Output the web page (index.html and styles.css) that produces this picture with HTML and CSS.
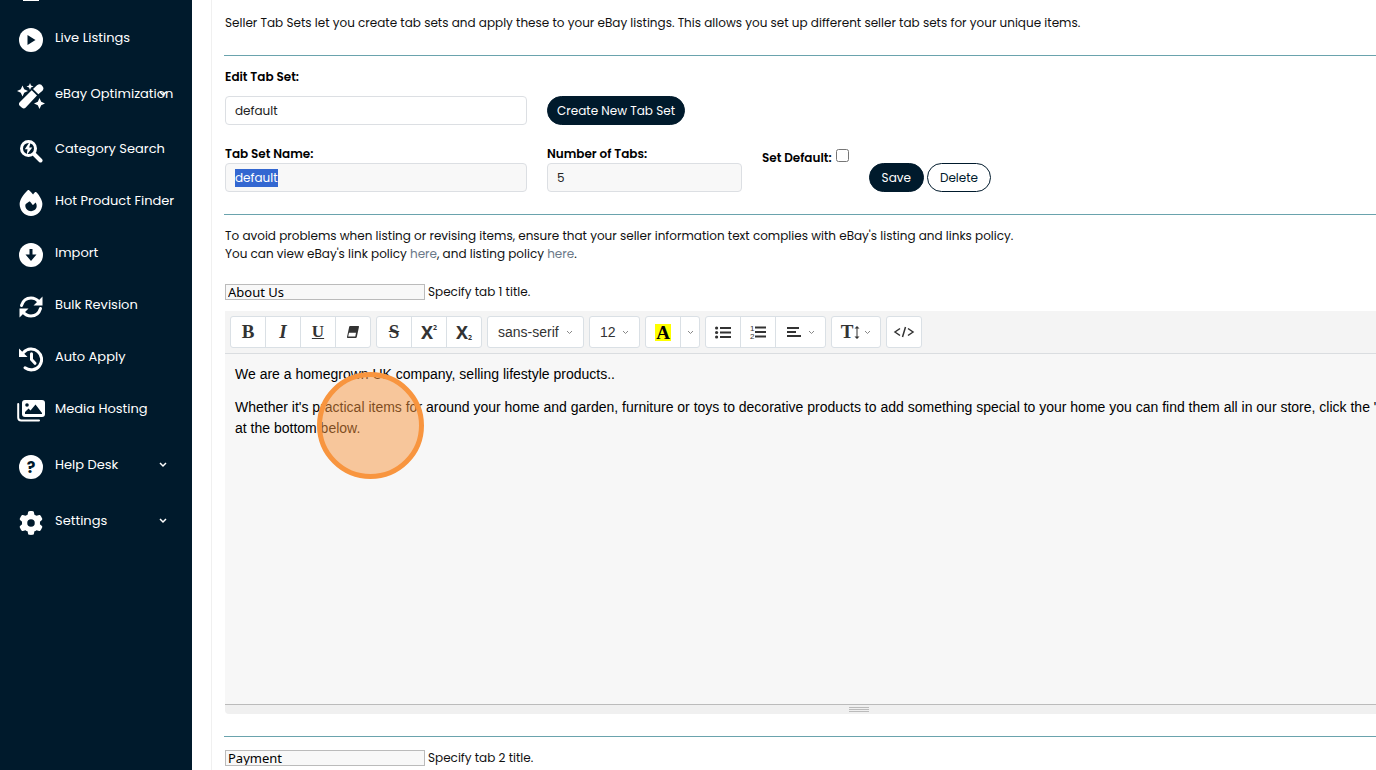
FILE: index.html
```html
<!DOCTYPE html>
<html lang="en">
<head>
    <meta charset="UTF-8">
    <meta name="viewport" content="width=device-width, initial-scale=1.0">
    <title>Seller Tab Sets</title>
    <link rel="stylesheet" href="styles.css">
</head>
<body>
    <div class="page">
        <nav class="sidebar">
            <div class="nav-cut"></div>
            <a href="#" class="nav-item">
                <svg class="nav-icon" viewBox="0 0 24 24"><circle cx="12" cy="12" r="12"/><path class="cut" d="M8.5 7v10l8-5z"/></svg>
                <span>Live Listings</span>
            </a>
            <a href="#" class="nav-item has-menu">
                <svg class="nav-icon wide" viewBox="0 0 27 26"><path d="M14.200 7.200 19.500 12.500 8 24.800Q6.300 26.300 4.500 24.800L2.200 22.800Q.7 21 2.200 19.300zM15.500 6 19.500 2.200Q22 .3 23.800 1.800L25.200 3.500Q26.800 5.600 25 7.700L20.800 11.300z"/><path d="M5 2.500 6.700 6.300 10.500 8 6.700 9.700 5 13.500 3.300 9.700 -.5 8 3.300 6.300zM12.500 0 13.500 2.500 16 3.500 13.500 4.500 12.500 7 11.500 4.500 9 3.500 11.500 2.500zM22 15 23.700 18.800 27.500 20.500 23.700 22.200 22 26 20.300 22.200 16.500 20.500 20.300 18.800z"/></svg>
                <span>eBay Optimization</span>
                <svg class="caret" viewBox="0 0 8 6"><path d="M1 1l3 3 3-3"/></svg>
            </a>
            <a href="#" class="nav-item">
                <svg class="nav-icon" viewBox="0 0 24 24"><circle class="line" cx="9.500" cy="9.500" r="7"/><path class="line thick" d="M15.500 15.500l6 6"/><path d="M10.200 3.500 5.800 10.200h2.700l-.8 5.800 5.600-7.500h-3.100l1.300-4.500z"/></svg>
                <span>Category Search</span>
            </a>
            <a href="#" class="nav-item">
                <svg class="nav-icon" viewBox="0 0 448 512"><path fill-rule="evenodd" d="M159.300 5.400c7.800-7.300 19.900-7.200 27.700.1c27.600 25.900 53.500 53.800 77.700 84c11-14.400 23.500-30.100 37-42.900c7.900-7.400 20.100-7.400 28 .1c34.600 33 63.900 76.600 84.500 118c20.300 40.800 33.800 82.500 33.800 111.900C448 404.200 348.200 512 224 512C98.400 512 0 404.100 0 276.500c0-38.400 17.800-85.300 45.400-131.700C73.300 97.700 112.700 48.600 159.300 5.400zM225.700 416c25.300 0 47.700-7 68.800-21c42.100-29.400 53.400-88.200 28.100-134.400c-4.500-9-16-9.600-22.500-2l-25.200 29.300c-6.600 7.600-18.500 7.400-24.700-.5c-16.500-21-26-32.500-42.800-53.800c-6.300-8-18.300-8.100-24.700-.1c-53.800 42.500-70.800 43.300-70.800 73.400C112 375.400 162.600 416 225.700 416z"/></svg>
                <span>Hot Product Finder</span>
            </a>
            <a href="#" class="nav-item">
                <svg class="nav-icon" viewBox="0 0 24 24"><circle cx="12" cy="12" r="12"/><path class="cut" d="M10.500 6h3v5.500H17.500L12 18 6.500 11.500h4z"/></svg>
                <span>Import</span>
            </a>
            <a href="#" class="nav-item">
                <svg class="nav-icon" viewBox="0 0 24 24"><path class="line" d="M2.500 10.500C4 5.500 8 3 12 3c3.500 0 6 1.500 8 4M21.500 13.500C20 18.500 16 21 12 21c-3.500 0-6-1.500-8-4"/><path d="M23.500 1.500v9h-9zM.5 22.500v-9h9z"/></svg>
                <span>Bulk Revision</span>
            </a>
            <a href="#" class="nav-item">
                <svg class="nav-icon" viewBox="0 0 24 24"><path class="line" d="M4.500 5.500A10.400 10.400 0 1 1 6 20.800"/><path d="M0 1.500v8.500h8.500z"/><path class="line" d="M12.500 6.800V12.500l3.500 3.800"/></svg>
                <span>Auto Apply</span>
            </a>
            <a href="#" class="nav-item">
                <svg class="nav-icon wide" viewBox="0 0 28 22"><rect x="5" y="0" width="23" height="17" rx="3"/><path class="line thin" d="M1.200 4v13.500q0 3 3 3H22"/><circle class="cut" cx="10" cy="5" r="1.800"/><path class="cut" d="M8 14v-2l3.500-3.500 2 2L18.500 4.500 25 13v1z"/></svg>
                <span>Media Hosting</span>
            </a>
            <a href="#" class="nav-item has-menu">
                <svg class="nav-icon" viewBox="0 0 24 24"><circle cx="12" cy="12" r="12"/><text class="mark" x="12" y="18">?</text></svg>
                <span>Help Desk</span>
                <svg class="caret" viewBox="0 0 8 6"><path d="M1 1l3 3 3-3"/></svg>
            </a>
            <a href="#" class="nav-item has-menu">
                <svg class="nav-icon" viewBox="0 0 512 512"><path fill-rule="evenodd" d="M495.900 166.600c3.200 8.700.5 18.400-6.400 24.600l-43.300 39.400c1.100 8.300 1.700 16.800 1.700 25.400s-.6 17.100-1.700 25.400l43.300 39.400c6.900 6.200 9.600 15.900 6.400 24.600c-4.400 11.900-9.700 23.300-15.800 34.300l-4.700 8.100c-6.600 11-14 21.400-22.100 31.200c-5.900 7.200-15.700 9.600-24.500 6.800l-55.700-17.700c-13.400 10.300-28.200 18.900-44 25.400l-12.500 57.100c-2 9.100-9 16.300-18.200 17.800c-13.800 2.300-28 3.500-42.500 3.500s-28.700-1.200-42.500-3.500c-9.200-1.500-16.200-8.700-18.200-17.800l-12.500-57.100c-15.800-6.500-30.600-15.100-44-25.400L83.100 425.900c-8.800 2.800-18.600.3-24.500-6.800c-8.100-9.800-15.500-20.200-22.100-31.200l-4.700-8.100c-6.100-11-11.400-22.400-15.800-34.300c-3.200-8.700-.5-18.400 6.400-24.600l43.300-39.400C64.600 273.100 64 264.600 64 256s.6-17.100 1.700-25.400L22.400 191.200c-6.900-6.200-9.600-15.900-6.400-24.600c4.400-11.900 9.700-23.300 15.800-34.300l4.700-8.100c6.600-11 14-21.400 22.100-31.200c5.900-7.200 15.700-9.600 24.500-6.800l55.700 17.700c13.400-10.300 28.200-18.900 44-25.400l12.500-57.100c2-9.100 9-16.300 18.200-17.800C227.300 1.200 241.500 0 256 0s28.700 1.200 42.500 3.500c9.200 1.500 16.200 8.700 18.200 17.800l12.500 57.100c15.800 6.500 30.600 15.100 44 25.400l55.700-17.700c8.800-2.800 18.600-.3 24.500 6.800c8.100 9.800 15.500 20.200 22.100 31.200l4.700 8.100c6.100 11 11.400 22.400 15.800 34.300zM256 336a80 80 0 1 0 0-160 80 80 0 1 0 0 160z"/></svg>
                <span>Settings</span>
                <svg class="caret" viewBox="0 0 8 6"><path d="M1 1l3 3 3-3"/></svg>
            </a>
        </nav>

        <main class="content">
            <p class="intro">Seller Tab Sets let you create tab sets and apply these to your eBay listings. This allows you set up different seller tab sets for your unique items.</p>
            <hr class="divider">

            <form class="tab-form">
                <label class="label" for="edit-set">Edit Tab Set:</label>
                <div class="form-row select-row">
                    <select id="edit-set" class="field name-field select-field"><option>default</option></select>
                    <button type="button" class="btn btn-dark">Create New Tab Set</button>
                </div>
                <div class="form-row">
                    <div class="name-field">
                        <label class="label" for="set-name">Tab Set Name:</label>
                        <input type="text" id="set-name" class="field" value="default">
                    </div>
                    <div class="count-field">
                        <label class="label" for="tab-count">Number of Tabs:</label>
                        <input type="text" id="tab-count" class="field" value="5">
                    </div>
                    <div class="default-field">
                        <label class="label" for="set-default">Set Default:</label>
                        <input type="checkbox" id="set-default" class="checkbox">
                    </div>
                    <div class="form-buttons">
                        <button type="button" class="btn btn-dark btn-wide">Save</button>
                        <button type="button" class="btn btn-light btn-wide">Delete</button>
                    </div>
                </div>
            </form>
            <hr class="divider">

            <p class="policy">To avoid problems when listing or revising items, ensure that your seller information text complies with eBay's listing and links policy.<br>
            You can view eBay's link policy <a href="#">here</a>, and listing policy <a href="#">here</a>.</p>

            <div class="title-row">
                <input type="text" id="title-1" class="title-input" value="About Us">
                <label for="title-1">Specify tab 1 title.</label>
            </div>

            <div class="editor">
                <div class="toolbar">
                    <div class="group">
                        <button type="button" class="tool serif" aria-label="Bold">B</button>
                        <button type="button" class="tool serif italic" aria-label="Italic">I</button>
                        <button type="button" class="tool serif underline" aria-label="Underline">U</button>
                        <button type="button" class="tool" aria-label="Clear formatting"><svg width="12" height="12" viewBox="0 0 12 12"><path d="M3 0h8.500q.5 0 .5.800L9.800 11q-.3 1-1 1H.5Q0 12 0 11L2.200.8Q2.400 0 3 0zM2 6.800 1.200 10.500H8.300L9 6.800z" fill-rule="evenodd"/></svg></button>
                    </div>
                    <div class="group">
                        <button type="button" class="tool serif strike" aria-label="Strikethrough">S</button>
                        <button type="button" class="tool script" aria-label="Superscript">X<sup>2</sup></button>
                        <button type="button" class="tool script" aria-label="Subscript">X<sub>2</sub></button>
                    </div>
                    <div class="group drop">
                        <select class="tool-select font-select" aria-label="Font"><option>sans-serif</option></select>
                        <svg class="chevron over" viewBox="0 0 7 5"><path d="M1 1l2.500 2.500L6 1"/></svg>
                    </div>
                    <div class="group drop">
                        <select class="tool-select size-select" aria-label="Font size"><option>12</option></select>
                        <svg class="chevron over" viewBox="0 0 7 5"><path d="M1 1l2.500 2.500L6 1"/></svg>
                    </div>
                    <div class="group">
                        <button type="button" class="tool serif" aria-label="Text colour"><span class="highlight">A</span></button>
                        <button type="button" class="tool narrow" aria-label="More colours"><svg class="chevron" viewBox="0 0 7 5"><path d="M1 1l2.500 2.500L6 1"/></svg></button>
                    </div>
                    <div class="group">
                        <button type="button" class="tool" aria-label="Bullet list"><svg width="16" height="13" viewBox="0 0 16 13"><path d="M5 1h11v2H5zM5 5.500h11v2H5zM5 10h11v2H5z"/><circle cx="1.600" cy="2" r="1.600"/><circle cx="1.600" cy="6.500" r="1.600"/><circle cx="1.600" cy="11" r="1.600"/></svg></button>
                        <button type="button" class="tool" aria-label="Numbered list"><svg class="num-list" width="16" height="14" viewBox="0 0 16 14"><path d="M5 1.500h11v2H5zM5 6h11v2H5zM5 10.500h11v2H5z"/><text class="num" x="0" y="6">1</text><text class="num" x="0" y="14">2</text></svg></button>
                        <button type="button" class="tool medium" aria-label="Align"><svg width="14" height="12" viewBox="0 0 14 12"><path d="M0 1h12v2H0zM0 5h9v2H0zM0 9h14v2H0z"/></svg><svg class="chevron" viewBox="0 0 7 5"><path d="M1 1l2.500 2.500L6 1"/></svg></button>
                    </div>
                    <div class="group">
                        <button type="button" class="tool medium serif height-tool" aria-label="Line height">T<svg width="6" height="13" viewBox="0 0 6 13"><path d="M3 0 5.500 2.500H3.500v8h2L3 13 .5 10.500h2v-8h-2z"/></svg><svg class="chevron" viewBox="0 0 7 5"><path d="M1 1l2.500 2.500L6 1"/></svg></button>
                    </div>
                    <div class="group">
                        <button type="button" class="tool" aria-label="Code view"><svg width="22" height="12" viewBox="0 0 22 12"><path class="code" d="M7 2.500 2 6 7 9.500M15 2.500l5 3.500L15 9.500M12.500 1l-3 10"/></svg></button>
                    </div>
                </div>
                <div class="editable" contenteditable="true" role="textbox" aria-label="Tab 1 content">
                    <p>We are a homegrown UK company, selling lifestyle products..</p>
                    <p>Whether it's practical items for around your home and garden, furniture or toys to decorative products to add something special to your home you can find them all in our store, click the "<br>at the bottom below.</p>
                    <div class="click-marker"></div>
                </div>
                <div class="statusbar"><div class="grip"></div></div>
            </div>
            <hr class="divider">

            <div class="title-row">
                <input type="text" id="title-2" class="title-input" value="Payment">
                <label for="title-2">Specify tab 2 title.</label>
            </div>
        </main>
    </div>

    <script>
        // Start with the tab set name selected, ready to be renamed
        const setName = document.getElementById('set-name');
        setName.focus();
        setName.select();
    </script>
</body>
</html>
```
FILE: styles.css
```css
* {
    box-sizing: border-box;
}

body {
    margin: 0;
    background-color: #fff;
    color: #111;
    font-family: Poppins, Inter, sans-serif;
    font-size: 12px;
    line-height: 18px;
    overflow: hidden;
}

p {
    margin: 0;
}

button,
input,
select {
    font-family: inherit;
    margin: 0;
}

.page {
    display: flex;
    height: 100vh;
    overflow: hidden;
}

/* Sidebar */
.sidebar {
    flex: 0 0 192px;
    background-color: #001a2c;
}

.nav-cut {
    width: 16px;
    height: 1px;
    margin: 0 0 11px 23px;
    background-color: #fff;
}

.nav-item {
    display: flex;
    align-items: center;
    height: 52px;
    padding: 0 8px 0 19px;
    color: #fff;
    font-size: 13px;
    text-decoration: none;
    white-space: nowrap;
    position: relative;
}

.has-menu {
    margin: 4px 0 3px;
}

.nav-icon {
    flex: none;
    width: 24px;
    height: 26px;
    margin: 4px 12px 0 0;
    fill: #fff;
}

.nav-icon.wide {
    width: 28px;
    margin: 4px 10px 0 -2px;
}

.nav-icon .cut {
    fill: #001a2c;
}

.nav-icon .line {
    fill: none;
    stroke: #fff;
    stroke-width: 3;
    stroke-linecap: round;
}

.nav-icon .thick {
    stroke-width: 4;
}

.nav-icon .thin {
    stroke-width: 2;
}

.nav-icon .mark {
    fill: #001a2c;
    font-size: 16px;
    font-weight: bold;
    text-anchor: middle;
}

.caret {
    position: absolute;
    right: 25px;
    top: 23px;
    width: 8px;
    height: 6px;
    fill: none;
    stroke: #fff;
    stroke-width: 1.5;
}

/* Content */
.content {
    flex: 1;
    min-width: 0;
    margin-left: 19px;
    padding: 14px 0 0 12px;
    border-left: 1px solid #f0f0f0;
    overflow: hidden;
}

.divider {
    height: 1px;
    margin: 0;
    border: 0;
    background-color: #6aa3ad;
}

.intro {
    padding: 0 1px 23px;
    white-space: nowrap;
}

.tab-form {
    padding: 12px 1px 22px;
}

.label {
    display: block;
    color: #000;
    font-weight: 600;
}

.form-row {
    display: flex;
    gap: 20px;
}

.select-row {
    padding: 10px 0 20px;
}

.name-field {
    flex: 0 0 302px;
}

.count-field {
    flex: 0 0 195px;
}

.default-field {
    display: flex;
    gap: 4px;
    padding-top: 4px;
    white-space: nowrap;
}

.checkbox {
    width: 13px;
    height: 13px;
}

.field {
    display: block;
    width: 100%;
    height: 29px;
    padding: 0 9px;
    border: 1px solid #dcdfe3;
    border-radius: 4px;
    background-color: #f8f8f8;
    color: #222;
    font-size: 12px;
    outline: none;
}

.select-field {
    width: 302px;
    background-color: #fff;
    appearance: none;
}

.field::selection {
    background-color: #3367d1;
    color: #fff;
}

.form-buttons {
    display: flex;
    gap: 3px;
    padding-top: 18px;
}

.btn {
    height: 29px;
    padding: 0 9px;
    border: 1px solid #001a2c;
    border-radius: 15px;
    font-size: 12px;
    white-space: nowrap;
}

.btn-dark {
    background-color: #001a2c;
    color: #fff;
}

.btn-light {
    background-color: #fff;
    color: #001a2c;
}

.btn-wide {
    padding: 0 12px;
}

.policy {
    padding: 12px 1px 20px;
}

.policy a {
    color: #6c7a89;
    text-decoration: none;
}

.title-row {
    display: flex;
    align-items: center;
    gap: 3px;
    padding-left: 1px;
}

.title-input {
    width: 200px;
    height: 16px;
    padding: 0 2px;
    border: 1px solid #bbb;
    background-color: #f8f8f8;
    color: #000;
    font-family: "Noto Sans", sans-serif;
    font-size: 13px;
    line-height: 14px;
}

/* Editor */
.editor {
    min-width: 1268px;
    margin: 10px 0 22px 1px;
}

.toolbar {
    display: flex;
    gap: 5px;
    padding: 5px;
    border-bottom: 1px solid #dadde0;
    background-color: #f4f4f4;
}

.group {
    display: flex;
    height: 32px;
    border: 1px solid #dae0e5;
    border-radius: 3px;
    background-color: #fff;
}

.drop {
    position: relative;
}

.tool {
    display: flex;
    align-items: center;
    justify-content: center;
    width: 34px;
    padding: 0;
    border: 0;
    background: none;
    color: #333;
    fill: #333;
    font-size: 17px;
}

.tool + .tool {
    width: 35px;
    border-left: 1px solid #dae0e5;
}

.tool + .tool.narrow {
    width: 19px;
}

.tool + .tool.medium {
    width: 50px;
    gap: 7px;
}

.tool.height-tool {
    width: 48px;
    gap: 1px;
}

.height-tool .chevron {
    margin-left: 3px;
}

.serif {
    font-family: "Liberation Serif", serif;
    font-size: 19px;
    font-weight: bold;
}

.italic {
    font-style: italic;
}

.underline {
    font-size: 17px;
    text-decoration: underline;
}

.strike {
    text-decoration: line-through;
}

.script {
    font-family: "Noto Sans", sans-serif;
    font-size: 18px;
    font-weight: bold;
}

.script sup,
.script sub {
    font-size: 7px;
    line-height: 8px;
}

.script sup {
    align-self: flex-start;
    padding-top: 7px;
}

.script sub {
    align-self: flex-end;
    padding-bottom: 5px;
}

.tool-select {
    padding: 0 10px;
    border: 0;
    background: none;
    color: #333;
    font-family: "Liberation Sans", Arial, sans-serif;
    font-size: 14px;
    appearance: none;
}

.font-select {
    width: 95px;
}

.size-select {
    width: 49px;
}

.chevron {
    width: 7px;
    height: 5px;
    fill: none;
    stroke: #888;
}

.chevron.over {
    position: absolute;
    right: 10px;
    top: 13px;
    pointer-events: none;
}

.highlight {
    padding: 0 1px;
    background-color: #ff0;
    color: #000;
    line-height: 17px;
}

.num-list {
    overflow: visible;
}

.num {
    font-family: "Liberation Sans", sans-serif;
    font-size: 8px;
}

.code {
    fill: none;
    stroke: #333;
    stroke-width: 1.5;
}

.editable {
    position: relative;
    min-height: 350px;
    padding: 10px;
    background-color: #f7f7f7;
    color: #000;
    font-family: "Liberation Sans", Arial, sans-serif;
    font-size: 14px;
    line-height: 21px;
    outline: none;
}

.editable p {
    margin-bottom: 12px;
    white-space: nowrap;
}

.click-marker {
    position: absolute;
    left: 92px;
    top: 18px;
    width: 107px;
    height: 107px;
    border: 5px solid #f8953f;
    border-radius: 50%;
    background-color: rgba(248, 149, 63, 0.5);
}

.statusbar {
    display: flex;
    align-items: center;
    justify-content: center;
    height: 10px;
    border-top: 1px solid #bbb;
    border-radius: 0 0 4px 4px;
    background-color: #f0f0f0;
}

.grip {
    width: 20px;
    height: 5px;
    border-top: 1px solid #bbb;
    border-bottom: 1px solid #bbb;
    background: linear-gradient(#bbb, #bbb) center / 100% 1px no-repeat;
}

.editor + .divider + .title-row {
    padding-top: 12px;
}
```
